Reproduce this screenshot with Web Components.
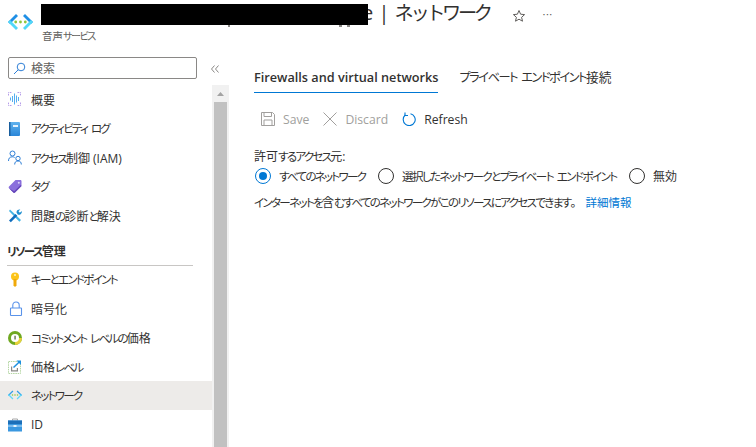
<!DOCTYPE html>
<html lang="ja">
<head>
<meta charset="utf-8">
<title>ネットワーク</title>
<style>
  html, body { margin: 0; height: 100%; background: #fff; overflow: hidden; }
  body {
    font-family: "Open Sans", "Noto Sans CJK JP", sans-serif;
    font-feature-settings: "palt";
    color: #323130;
    display: flex;
    flex-direction: column;
  }
</style>
</head>
<body>

<page-header title-text="e | ネットワーク" sub-text="音声サービス"></page-header>

<div style="display:flex;flex:1;min-height:0">
  <side-nav>
    <nav-item label="概要">
      <svg slot="icon" width="16" height="16" viewBox="0 0 16 16"><path d="M.5 3.500v-3h3M9.500.5h3v3M12.500 10.500v3h-3M3.500 13.500h-3v-3" fill="none" stroke="#b49be8" stroke-width="1" stroke-dasharray="1.500 .7"/><path d="M2.500 5.500v3M4.500 4v6M6.500 1.500v11M8.500 3.500v7M10.500 5v4" stroke="#55aef0" stroke-width="1" fill="none"/></svg>
    </nav-item>
    <nav-item label="アクティビティ ログ">
      <svg slot="icon" width="16" height="16" viewBox="0 0 16 16"><defs><linearGradient id="b" x1="0" y1="0" x2="0" y2="1"><stop offset="0" stop-color="#5fb2ee"/><stop offset="1" stop-color="#2a86d8"/></linearGradient></defs><rect x="1" y="1" width="11" height="14" rx="1" fill="url(#b)"/><rect x="1" y="1" width="1.500" height="14" fill="#1a5f9e"/><rect x="5" y="4" width="5" height="2" fill="#e4f2fd"/></svg>
    </nav-item>
    <nav-item label="アクセス制御 (IAM)">
      <svg slot="icon" width="16" height="16" viewBox="0 0 16 16" fill="none" stroke="#2f7fd6" stroke-width="1"><circle cx="4.500" cy="3.500" r="2.500"/><path d="M.5 11c0-2.800 1.400-4.200 3.800-4.200 1 0 1.700.2 2.300.7"/><circle cx="10" cy="8.500" r="2.200"/><path d="M6.700 14.500c0-2.400 1.200-3.500 3.300-3.500s3.300 1.100 3.300 3.500"/></svg>
    </nav-item>
    <nav-item label="タグ">
      <svg slot="icon" width="16" height="16" viewBox="0 0 16 16"><path d="M7.500 1h4.700c.8 0 1.300.5 1.300 1.300V7L7 13.500c-.5.500-1.200.500-1.700 0L1 9.200c-.5-.5-.5-1.200 0-1.700z" fill="#8a6fdc"/><path d="M1 9.200l4.300 4.300c.5.500 1.200.500 1.700 0L13.500 7l-1-1-6.300 6.300z" fill="#6546b8"/><circle cx="10.800" cy="3.700" r="1" fill="#dcd3f7"/></svg>
    </nav-item>
    <nav-item label="問題の診断と解決">
      <svg slot="icon" width="16" height="16" viewBox="0 0 16 16"><path d="M2 1.500l11 10.500-1.600 1.700L1 3z" fill="#45b4e4"/><path d="M1 12.500l6.500-6.500 1.800 1.800-6.500 6.500z" fill="#0f6cbd"/><path d="M8.500 4.500a3 3 0 0 1 3.800-3l-1.800 1.800 1.400 1.400 1.800-1.800a3 3 0 0 1-4 3.700z" fill="#1f8fd0"/></svg>
    </nav-item>

    <nav-heading label="リソース管理"></nav-heading>

    <nav-item label="キーとエンドポイント">
      <svg slot="icon" width="16" height="16" viewBox="0 0 16 16"><circle cx="7" cy="4.500" r="4" fill="#fcc419"/><path d="M5.500 7h3v6.500L7 15l-1.500-1.500z" fill="#f0a90a"/><circle cx="7" cy="3" r="1" fill="#fff3c4"/></svg>
    </nav-item>
    <nav-item label="暗号化">
      <svg slot="icon" width="16" height="16" viewBox="0 0 16 16" fill="none" stroke="#5a93ea" stroke-width="1.100"><rect x="2.500" y="7" width="11" height="7.500" rx=".6"/><path d="M4.800 7V4.200a3.200 3.200 0 0 1 6.400 0V7"/></svg>
    </nav-item>
    <nav-item label="コミットメント レベルの価格">
      <svg slot="icon" width="16" height="16" viewBox="0 0 16 16"><circle cx="7" cy="8" r="7" fill="#6fa820"/><path d="M14 8a7 7 0 0 1-7 7V8z" fill="#e6d23a"/><circle cx="7" cy="8" r="4" fill="#fff"/><path d="M6.500 5.800h1.100v3.800H6.500z" fill="#3c4a1c"/></svg>
    </nav-item>
    <nav-item label="価格レベル">
      <svg slot="icon" width="16" height="16" viewBox="0 0 16 16"><rect x=".5" y="2.500" width="12" height="12" fill="none" stroke="#b5d6a4" stroke-width="1" stroke-dasharray="1.500 .8"/><path d="M3 7.500v5h7V9H8.800v2.300H4.200V7.500z" fill="#8a8886"/><path d="M5.500 8.500L11 3.200" stroke="#1e90e0" stroke-width="1.500" fill="none"/><path d="M8.500 1.500H13V6z" fill="#1e90e0"/></svg>
    </nav-item>
    <nav-item label="ネットワーク" selected>
      <svg slot="icon" width="16" height="16" viewBox="0 0 16 16"><path d="M4.500 2.500L0 7l.9.900L3 5.800 5.400 3.400z" fill="#2f9ee8"/><path d="M.9 6.100L0 7l4.500 4.500.9-.9z" fill="#60d8fa"/><path d="M9.500 2.500L14 7l-.9.900L11 5.800 8.600 3.400z" fill="#2f9ee8"/><path d="M13.100 6.100L14 7l-4.500 4.500-.9-.9z" fill="#60d8fa"/><circle cx="4.500" cy="7" r=".8" fill="#8cc63f"/><circle cx="7" cy="7" r=".8" fill="#8cc63f"/><circle cx="9.500" cy="7" r=".8" fill="#8cc63f"/></svg>
    </nav-item>
    <nav-item label="ID">
      <svg slot="icon" width="16" height="16" viewBox="0 0 16 16"><path d="M4.500 3.500V2h5v1.500" fill="none" stroke="#a8a8a8"/><rect x="0" y="3.500" width="14" height="11" fill="#3a98e0"/><rect x="0" y="3.500" width="14" height="3.500" fill="#1c6fb8"/><rect x="0" y="8.500" width="14" height="1" fill="#bfe0f7"/><rect x="5.500" y="8" width="3" height="2" fill="#e6f3fc"/></svg>
    </nav-item>
  </side-nav>

  <network-panel></network-panel>
</div>

<script>
// the reference font has much narrower kana than Noto, so squeeze kana runs only
const squeeze = (m) => `<span style="font-size:.96em;letter-spacing:var(--kana-ls,-.15em);word-spacing:.2em">${m}</span>`;
const kana = (s) => s.replace(/[\u3041-\u30ff][\u3041-\u30ff ]*[\u3041-\u30ff]|[\u3041-\u30ff]/g, squeeze);

// header with the service icon, blanked out resource name and star / more actions
class PageHeader extends HTMLElement {
  constructor() {
    super();
    const root = this.attachShadow({ mode: "open" });
    root.innerHTML = `
      <style>
        :host { display: flex; height: 57px; flex: none; position: relative; }
        .logo { margin: 14px 0 0 8px; flex: none; }
        .texts { margin-left: 8px; flex: none; }
        h1 {
          --kana-ls: -.175em;
          margin: 0 0 0 321px;
          height: 24px;
          font: 400 20px/24px "Open Sans", "Noto Sans CJK JP", sans-serif;
          color: #323130;
          white-space: pre;
        }
        .sub { font-size: 10.500px; line-height: 14px; margin-top: 4px; margin-left: 1px; color: #605e5c; }
        .bar { position: absolute; left: 41px; top: 4px; width: 327px; height: 21px; background: #000; }
        .tail { position: absolute; top: 25px; height: 2px; width: 3px; background: #8a8886; }
        .acts { display: flex; gap: 17px; margin: 8px 0 0 22px; height: 14px; align-items: center; }
        .dots { font-size: 11px; line-height: 14px; color: #605e5c; letter-spacing: .5px; margin-top: -4px; }
      </style>
      <svg class="logo" width="25" height="16" viewBox="0 0 25 16">
        <path d="M8 0L0 8l2 2 8-8z" fill="#1f8fe6"/><path d="M0 8l8 8 2-2-8-8z" fill="#50d8f8"/>
        <path d="M17 0l8 8-2 2-8-8z" fill="#1f8fe6"/><path d="M25 8l-8 8-2-2 8-8z" fill="#50d8f8"/>
        <circle cx="7.700" cy="8" r="1.400" fill="#8cc63f"/><circle cx="12.500" cy="8" r="1.400" fill="#8cc63f"/><circle cx="17.300" cy="8" r="1.400" fill="#8cc63f"/>
      </svg>
      <div class="texts">
        <div style="display:flex;padding-top:1px">
          <h1></h1>
          <div class="acts">
            <svg width="14" height="14" viewBox="0 0 14 14"><path d="M7 1.500l1.600 3.700 4 .4-3 2.700.9 3.900L7 10.200l-3.500 2 .9-3.900-3-2.700 4-.4z" fill="none" stroke="#605e5c"/></svg>
            <span class="dots">···</span>
          </div>
        </div>
        <div class="sub"></div>
      </div>
      <div class="bar"></div>
      <div class="tail" style="left:228px;width:2px"></div>
      <div class="tail" style="left:339px"></div>
      <div class="tail" style="left:347px"></div>`;
    root.querySelector("h1").innerHTML = kana(this.getAttribute("title-text"));
    root.querySelector(".sub").innerHTML = kana(this.getAttribute("sub-text"));
  }
}

// left column: search, collapse button, scrolling menu
class SideNav extends HTMLElement {
  constructor() {
    super();
    this.attachShadow({ mode: "open" }).innerHTML = `
      <style>
        :host { display: flex; flex-direction: column; width: 229px; flex: none; }
        .top { display: flex; align-items: center; height: 22px; padding-left: 8px; }
        .search {
          box-sizing: border-box; width: 189px; height: 22px;
          border: 1px solid #8a8886; border-radius: 2px;
          display: flex; align-items: center; gap: 5px; padding-left: 4px;
          font-size: 12px; color: #605e5c;
        }
        .collapse { margin: 2px 0 0 14px; width: 8px; height: 8px; }
        .body { display: flex; flex: 1; min-height: 0; margin-top: 6px; }
        .list { width: 212px; flex: none; }
        .track { width: 17px; background: #f1f1f1; display: flex; flex-direction: column; align-items: center; }
        .arrow { height: 17px; display: flex; align-items: center; justify-content: center; flex: none; }
        .thumb { width: 13px; flex: 1; background: #c1c1c1; }
      </style>
      <div class="top">
        <div class="search">
          <svg width="13" height="13" viewBox="0 0 13 13" fill="none" stroke="#2f7fd6"><circle cx="8" cy="5" r="3.800"/><path d="M5.200 7.800L1 12"/></svg>
          検索
        </div>
        <svg class="collapse" viewBox="0 0 8 8" fill="none" stroke="#8a8886"><path d="M3.500.5L.5 4l3 3.500M7.500.5L4.500 4l3 3.500"/></svg>
      </div>
      <div class="body">
        <div class="list"><slot></slot></div>
        <div class="track">
          <div class="arrow"><svg width="7" height="4" viewBox="0 0 7 4"><path d="M3.500 0L7 4H0z" fill="#a3a3a3"/></svg></div>
          <div class="thumb"></div>
        </div>
      </div>`;
  }
}

class NavItem extends HTMLElement {
  constructor() {
    super();
    const root = this.attachShadow({ mode: "open" });
    root.innerHTML = `
      <style>
        :host { display: flex; align-items: center; height: 29px; padding-left: 8px; gap: 7px; font-size: 12px; color: #323130; white-space: pre; }
        :host([selected]) { background: #edebe9; }
        .ic { width: 16px; height: 16px; display: flex; flex: none; }
      </style>
      <span class="ic"><slot name="icon"></slot></span>
      <span class="t"></span>`;
    root.querySelector(".t").innerHTML = kana(this.getAttribute("label"));
  }
}

class NavHeading extends HTMLElement {
  constructor() {
    super();
    const root = this.attachShadow({ mode: "open" });
    root.innerHTML = `
      <style>
        :host { display: block; margin: 6px 19px -1px 7px; height: 30px; box-sizing: border-box; padding-top: 8px; border-bottom: 1px solid #c8c6c4; font-size: 12px; font-weight: 600; line-height: 16px; color: #323130; }
      </style>
      <span></span>`;
    root.querySelector("span").innerHTML = kana(this.getAttribute("label"));
  }
}

class TabBar extends HTMLElement {
  constructor() {
    super();
    this.attachShadow({ mode: "open" }).innerHTML = `
      <style>
        :host { display: flex; gap: 21px; height: 25px; font-size: 12.700px; line-height: 18px; white-space: pre; --kana-ls: -.118em; }
        ::slotted(*) { display: block; height: 25px; box-sizing: border-box; }
        ::slotted([active]) { border-bottom: 1px solid #0078d4; font-weight: 600; }
      </style>
      <slot></slot>`;
  }
}

class ToolButton extends HTMLElement {
  constructor() {
    super();
    this.attachShadow({ mode: "open" }).innerHTML = `
      <style>
        :host { display: flex; align-items: center; gap: 8px; font-size: 12.200px; color: #323130; white-space: nowrap; }
        :host([disabled]) { color: #a19f9d; }
        .ic { width: 14px; height: 14px; display: flex; }
      </style>
      <span class="ic"><slot name="icon"></slot></span>
      <slot></slot>`;
  }
}

class RadioOption extends HTMLElement {
  constructor() {
    super();
    this.attachShadow({ mode: "open" }).innerHTML = `
      <style>
        :host { display: flex; align-items: center; gap: 8px; font-size: 12px; white-space: pre; }
        .r { box-sizing: border-box; width: 16px; height: 16px; border-radius: 50%; border: 1px solid #323130; display: flex; align-items: center; justify-content: center; flex: none; }
        :host([checked]) .r { border-color: #0078d4; }
        :host([checked]) .r::after { content: ""; width: 8px; height: 8px; border-radius: 50%; background: #0078d4; }
      </style>
      <span class="r"></span>
      <slot></slot>`;
  }
}

// main part of the blade
class NetworkPanel extends HTMLElement {
  constructor() {
    super();
    this.attachShadow({ mode: "open" }).innerHTML = `
      <style>
        :host { display: block; flex: 1; padding: 11px 0 0 25px; }
        a { color: #0078d4; text-decoration: none; font-size: 11.500px; margin-left: 6px; }
        .tools { display: flex; gap: 14px; margin: 17px 0 0 7px; height: 18px; }
        .label { font-size: 12px; line-height: 16px; margin-top: 21px; white-space: pre; }
        .radios { display: flex; margin: 3px 0 0 1px; height: 16px; }
        .desc { --kana-ls: -.145em; font-size: 12px; line-height: 16px; margin-top: 11px; white-space: pre; }
      </style>
      <tab-bar><span active>Firewalls and virtual networks</span><span>${kana("プライベート エンドポイント")}接続</span></tab-bar>
      <div class="tools">
        <tool-button disabled>
          <svg slot="icon" viewBox="0 0 14 14" width="14" height="14" fill="none" stroke="#a19f9d"><path d="M.5.500h11l2 2v11H.5zM3 .5v4h7.500v-4M3 13.500V8h8v5.500"/></svg>Save
        </tool-button>
        <tool-button disabled>
          <svg slot="icon" viewBox="0 0 14 14" width="14" height="14" fill="none" stroke="#a19f9d"><path d="M.5.500l13 13M13.500.5l-13 13"/></svg>Discard
        </tool-button>
        <tool-button>
          <svg slot="icon" viewBox="0 0 14 14" width="14" height="14" fill="none" stroke="#0078d4" stroke-width="1.100"><path d="M8.500 1.700A6 6 0 1 1 3.300 3"/><path d="M3 .5v3h3"/></svg>Refresh
        </tool-button>
      </div>
      <div class="label">${kana("許可するアクセス元")}:</div>
      <div class="radios">
        <radio-option checked style="width:123px">${kana("すべてのネットワーク")}</radio-option>
        <radio-option style="width:251px;--kana-ls:-.135em">${squeeze("選択したネットワークとプライベート エンドポイント")}</radio-option>
        <radio-option>無効</radio-option>
      </div>
      <div class="desc">${kana("インターネットを含むすべてのネットワークがこのリソースにアクセスできます")}。 <a href="#">詳細情報</a></div>`;
  }
}

customElements.define("page-header", PageHeader);
customElements.define("side-nav", SideNav);
customElements.define("nav-item", NavItem);
customElements.define("nav-heading", NavHeading);
customElements.define("tab-bar", TabBar);
customElements.define("tool-button", ToolButton);
customElements.define("radio-option", RadioOption);
customElements.define("network-panel", NetworkPanel);
</script>
</body>
</html>
